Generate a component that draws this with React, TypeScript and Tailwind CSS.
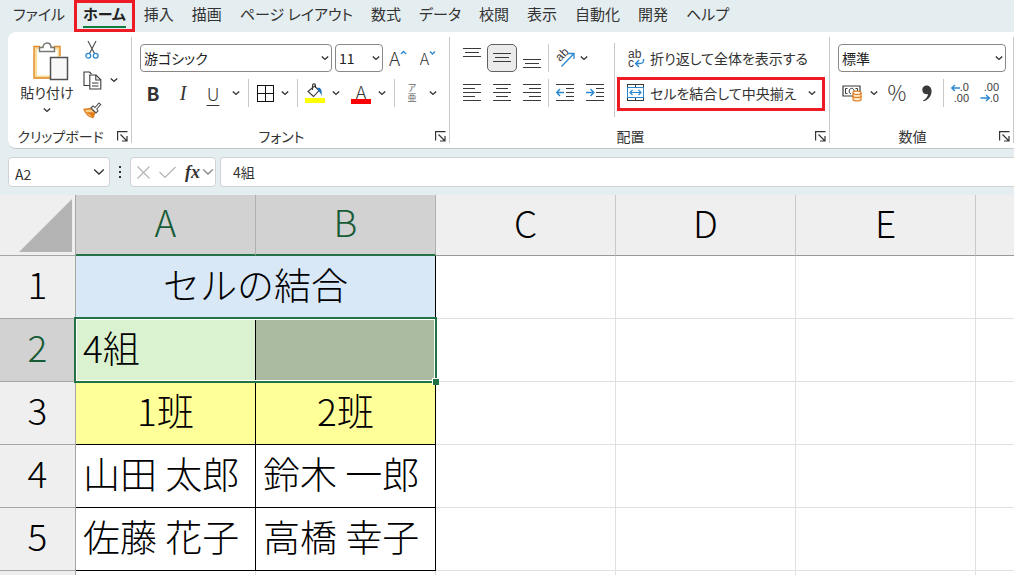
import React from 'react';
import clsx from 'clsx';

const BLUE = '#2b88d0';
const INK = '#3b3a39';

interface IconButtonProps {
  label: string;
  className?: string;
  children: React.ReactNode;
}

const IconButton: React.FC<IconButtonProps> = ({ label, className, children }) => (
  <button
    type="button"
    aria-label={label}
    className={clsx('flex h-7 shrink-0 items-center justify-center', className ?? 'w-[30px]')}
  >
    {children}
  </button>
);

const Chevron: React.FC<{ className?: string; size?: number }> = ({ className, size = 8 }) => (
  <svg width={size} height={size} viewBox="0 0 8 8" fill="none" className={className ?? 'text-[#333333]'}>
    <path d="M0.8 2.4 L4 5.4 L7.2 2.4" stroke="currentColor" strokeWidth={size > 8 ? 0.9 : 1.4} />
  </svg>
);

const MenuArrow: React.FC<{ label: string }> = ({ label }) => (
  <IconButton label={label} className="w-4">
    <Chevron />
  </IconButton>
);

const Separator: React.FC<{ className?: string }> = ({ className }) => (
  <div className={clsx('h-7 w-px shrink-0 bg-[#c8c8c8]', className)} />
);

interface GroupProps {
  title: string;
  className: string;
  children: React.ReactNode;
}

const Group: React.FC<GroupProps> = ({ title, className, children }) => (
  <section
    aria-label={title}
    className={clsx('my-[5px] flex shrink-0 flex-col gap-5 border-r border-[#c8c8c8] pt-[5px]', className)}
  >
    <div className="flex h-[67px]">{children}</div>
    <div className="flex h-[14px] items-center">
      <span className="flex-1 pr-1 text-center text-[14px] leading-[14px]">{title}</span>
      <button type="button" aria-label={`${title}の設定`} className="flex w-[14px] items-center">
        <svg width="11" height="11" viewBox="0 0 11 11" fill="none" stroke="#333" strokeWidth="1.2">
          <path d="M0.6 9.5 V0.6 H10.5" />
          <path d="M3.5 3.5 L9.5 9.5 M10 5 V10 H5" />
        </svg>
      </button>
    </div>
  </section>
);

const SelectBox: React.FC<{ label: string; value: string; className: string }> = ({ label, value, className }) => (
  <div className={clsx('relative shrink-0', className)}>
    <select
      aria-label={label}
      defaultValue={value}
      className="h-7 w-full appearance-none rounded-[4px] border border-[#8a8886] bg-white pl-[3px] text-[14px] text-[#222222]"
    >
      <option>{value}</option>
    </select>
    <Chevron className="pointer-events-none absolute top-[10px] right-[3px] text-[#333333]" />
  </div>
);

const LINE_ENDS = {
  left: [[0, 18], [0, 12], [0, 18], [0, 12], [0, 18]],
  center: [[0, 18], [3, 15], [0, 18], [3, 15], [0, 18]],
  right: [[0, 18], [6, 18], [0, 18], [6, 18], [0, 18]],
};

const AlignIcon: React.FC<{ side: keyof typeof LINE_ENDS }> = ({ side }) => (
  <svg width="18" height="18" viewBox="0 0 18 18" stroke={INK} shapeRendering="crispEdges">
    {LINE_ENDS[side].map(([from, to], i) => (
      <path key={i} d={`M${from} ${i * 4 + 0.5} H${to}`} />
    ))}
  </svg>
);

const VerticalIcon: React.FC<{ top: number }> = ({ top }) => (
  <svg width="18" height="28" viewBox="0 0 18 28" stroke={INK} shapeRendering="crispEdges">
    <path d={`M0 ${top + 0.5} H18 M2 ${top + 4.5} H16 M0 ${top + 8.5} H18`} />
  </svg>
);

const IndentIcon: React.FC<{ direction: 'in' | 'out' }> = ({ direction }) => (
  <svg width="18" height="18" viewBox="0 0 18 18" fill="none">
    <path
      d="M0 0.5 H18 M10 4.5 H18 M10 8.5 H18 M10 12.5 H18 M0 16.5 H18"
      stroke={INK}
      shapeRendering="crispEdges"
    />
    <path
      d={direction === 'out' ? 'M8 8.5 H1 M4 5 L0.8 8.5 L4 12' : 'M0 8.5 H7.5 M4.5 5 L7.8 8.5 L4.5 12'}
      stroke={BLUE}
      strokeWidth="1.4"
    />
  </svg>
);

const PasteIcon: React.FC = () => (
  <svg width="36" height="40" viewBox="0 0 36 40" fill="none" className="ml-2 shrink-0">
    <path d="M2.5 6 H26 V35 H2.5 Z" fill="#fff" stroke="#fbdc9a" strokeWidth="3" />
    <path d="M7 4.5 H1 V36 H17 M21 4.5 H27 V14" stroke="#e08a2c" strokeWidth="1.4" />
    <path
      d="M6.5 9.5 V5.5 H10 C10 3 11.5 1 14 1 C16.5 1 18 3 18 5.5 H21.5 V9.5 Z"
      fill="#fff"
      stroke="#777"
      strokeWidth="1.4"
    />
    <path d="M17.5 15.5 H34.5 V37.5 H17.5 Z" fill="#f8f8f8" stroke="#505050" strokeWidth="1.5" />
  </svg>
);

const CutIcon: React.FC = () => (
  <svg width="14" height="20" viewBox="0 0 14 20" fill="none">
    <path d="M3 1 L9.5 13.5 M11 1 L4.5 13.5" stroke="#555" strokeWidth="1.2" />
    <circle cx="3.3" cy="15.7" r="2.4" stroke={BLUE} strokeWidth="1.3" />
    <circle cx="10.7" cy="15.7" r="2.4" stroke={BLUE} strokeWidth="1.3" />
  </svg>
);

const CopyIcon: React.FC = () => (
  <svg width="19" height="19" viewBox="0 0 19 19" fill="none" stroke={INK} strokeWidth="1.1">
    <path d="M6.5 14.5 H1 V1 H6.5 L8.5 3" />
    <path d="M6.8 4 H13 L17.8 8.8 V18 H6.8 Z" fill="#fff" />
    <path d="M12.8 4 V9 H17.8 M9 12 H15.5 M9 15 H15.5" />
  </svg>
);

const PainterIcon: React.FC = () => (
  <svg width="19" height="17" viewBox="0 0 19 17" fill="none">
    <path d="M1 7.5 L8 6.5 L12 10.5 L10 15.5 C6 15 3 12 1 7.5 Z" fill="#fbd08a" stroke="#e07b1c" strokeWidth="1.3" />
    <path d="M3.5 10 L12 10.5 L10 15.5 Z" fill="#e07b1c" />
    <path d="M8 6 L10 4 L12 5.5 L16 1 L17.7 2.5 L13.8 7 L15 9 L13 11 Z" fill="#fff" stroke="#555" strokeWidth="1.1" />
  </svg>
);

const BorderIcon: React.FC = () => (
  <svg width="17" height="17" viewBox="0 0 17 17" fill="none" stroke="#111" shapeRendering="crispEdges">
    <path d="M0.5 0.5 H16.5 V16.5 H0.5 Z M8.5 0.5 V16.5 M0.5 8.5 H16.5" />
  </svg>
);

const FillIcon: React.FC = () => (
  <svg width="20" height="20" viewBox="0 0 20 20" fill="none">
    <path d="M3 8.5 L9.5 3 L14 7.5 L8.5 13.5 Z" fill="#fff" stroke={INK} strokeWidth="1.1" />
    <path d="M7.5 7 V2.5 C7.5 0.3 10.5 0.3 10.5 2.5 V5" stroke={INK} strokeWidth="1.1" />
    <path d="M12 5 C15.5 4 17.5 6.5 16.5 13 C15.8 10.5 15 9 13.5 8.5 Z" fill="#1f6fb8" />
    <path d="M0 15 H20 V20 H0 Z" fill="#ffff00" />
  </svg>
);

const OrientationIcon: React.FC = () => (
  <svg width="22" height="20" viewBox="0 0 22 20" fill="none" className="overflow-visible">
    <text x="8" y="14" transform="rotate(-45 8 14)" fontSize="12" fontFamily="Liberation Sans" fill={INK}>
      ab
    </text>
    <path d="M9.5 18.5 L21.5 6 M16 5.5 H22 V11" stroke={BLUE} strokeWidth="1.3" />
  </svg>
);

const WrapIcon: React.FC = () => (
  <svg width="18" height="18" viewBox="0 0 18 18" fill="none" className="overflow-visible">
    <text x="1" y="9" fontSize="12" fontFamily="Liberation Sans" fill={INK}>
      ab
    </text>
    <text x="1" y="18" fontSize="12" fontFamily="Liberation Sans" fill={INK}>
      c
    </text>
    <path d="M16.5 10 C17 13 15.5 14.5 13 14.5 H9 M12 11 L8.6 14.5 L12 18" stroke={BLUE} strokeWidth="1.4" />
  </svg>
);

const MergeIcon: React.FC = () => (
  <svg width="18" height="18" viewBox="0 0 18 18" fill="none">
    <path d="M0.5 0.5 H16.5 V16.5 H0.5 Z M8.5 0.5 V4 M8.5 13 V17" stroke={INK} shapeRendering="crispEdges" />
    <path d="M0.5 3.5 H16.5 V13.5 H0.5 Z" fill="#fff" stroke={BLUE} shapeRendering="crispEdges" />
    <path d="M3 8.5 H14 M5.5 6 L3 8.5 L5.5 11 M11.5 6 L14 8.5 L11.5 11" stroke={BLUE} strokeWidth="1.2" />
  </svg>
);

const AccountingIcon: React.FC = () => (
  <svg width="20" height="18" viewBox="0 0 20 18" fill="none">
    <path d="M1 2 H18 V12 H1 Z" stroke={INK} strokeWidth="1.2" />
    <path d="M5.5 4.5 H3.5 V9.5 H5.5 M13.5 4.5 H15.5 V7" stroke={INK} />
    <path d="M9 9.8 C6.5 9.5 6.5 4.5 9.5 4.3 C11.5 4.3 12.2 6 12 7.5" stroke={INK} />
    <path d="M11 8.8 V15.5 C11 17.5 19 17.5 19 15.5 V8.8" fill="#fde5c4" stroke="#e07b1c" strokeWidth="1.2" />
    <ellipse cx="15" cy="8.8" rx="4" ry="1.6" fill="#fff" stroke="#e07b1c" strokeWidth="1.2" />
    <path d="M11 12 C11 14 19 14 19 12" stroke="#e07b1c" strokeWidth="1.2" />
  </svg>
);

const CommaIcon: React.FC = () => (
  <svg width="10" height="17" viewBox="0 0 10 17">
    <path
      d="M4.6 0.5 C7.8 0.5 9.6 3 9.6 6 C9.6 11 6.5 15 1.5 16.3 L1 15.4 C4 14 6 11.5 6 9 C2.5 10 0.3 7.8 0.3 4.8 C0.3 2.3 2.2 0.5 4.6 0.5 Z"
      fill={INK}
    />
  </svg>
);

const DecimalIcon: React.FC<{ more: boolean }> = ({ more }) => (
  <svg
    width="20"
    height="20"
    viewBox="0 0 20 20"
    fill="none"
    fontSize="11"
    fontFamily="Liberation Sans"
    className="overflow-visible"
  >
    <text x="19" y="8" textAnchor="end" fill={INK}>
      {more ? '.0' : '.00'}
    </text>
    <text x="19" y="19" textAnchor="end" fill={INK}>
      {more ? '.00' : '.0'}
    </text>
    <path
      d={more ? 'M10 5 H2 M5 2 L1.8 5 L5 8' : 'M0.5 15 H9 M6 12 L9.4 15 L6 18'}
      stroke={BLUE}
      strokeWidth="1.4"
    />
  </svg>
);

const TABS = [
  'ファイル',
  'ホーム',
  '挿入',
  '描画',
  'ページ レイアウト',
  '数式',
  'データ',
  '校閲',
  '表示',
  '自動化',
  '開発',
  'ヘルプ',
];

const TabBar: React.FC = () => (
  <nav className="flex h-8 shrink-0 items-start gap-[18px] pl-[13px] text-[15px] leading-7 whitespace-nowrap">
    {TABS.map(tab =>
      tab === 'ホーム' ? (
        <button key={tab} type="button" className="relative font-bold text-[#222222]">
          {tab}
          <span className="absolute inset-x-0 top-[26px] h-0.5 bg-[#107c41]" />
          <span className="absolute -inset-x-[9px] top-0 h-8 border-[3px] border-[#ed1c24]" />
        </button>
      ) : (
        <button key={tab} type="button">
          {tab}
        </button>
      )
    )}
  </nav>
);

const Ribbon: React.FC = () => (
  <div className="ml-2 flex shrink-0 overflow-hidden rounded-l-lg border-b border-[#c4c8ca] bg-white whitespace-nowrap">
    <Group title="クリップボード" className="w-[124px]">
      <button type="button" className="ml-3 flex w-[54px] flex-col items-center text-[14px] leading-5">
        <PasteIcon />
        <span>貼り付け</span>
        <Chevron className="mt-1 shrink-0 text-[#333333]" />
      </button>
      <div className="-mt-1.5 ml-2 flex flex-col gap-0.5">
        <IconButton label="切り取り" className="w-5">
          <CutIcon />
        </IconButton>
        <div className="flex gap-1">
          <IconButton label="コピー" className="w-5">
            <CopyIcon />
          </IconButton>
          <MenuArrow label="コピーのオプション" />
        </div>
        <IconButton label="書式のコピー" className="w-5">
          <PainterIcon />
        </IconButton>
      </div>
    </Group>

    <Group title="フォント" className="w-[318px]">
      <div className="flex flex-col gap-[3px]">
        <div className="flex h-8 items-center pl-2">
          <SelectBox label="フォント名" value="游ゴシック" className="w-[192px]" />
          <SelectBox label="フォント サイズ" value="11" className="ml-[3px] w-12" />
          <IconButton label="フォント サイズの拡大">
            <span className="text-[19px] font-light">A</span>
            <svg width="7" height="16" viewBox="0 0 7 16" fill="none">
              <path d="M1 4 L3.5 1.5 L6 4" stroke={BLUE} strokeWidth="1.4" />
            </svg>
          </IconButton>
          <IconButton label="フォント サイズの縮小">
            <span className="text-[16px] font-light">A</span>
            <svg width="7" height="16" viewBox="0 0 7 16" fill="none">
              <path d="M1 1.5 L3.5 4 L6 1.5" stroke={BLUE} strokeWidth="1.4" />
            </svg>
          </IconButton>
        </div>
        <div className="flex h-8 items-center pl-[6px]">
          <IconButton label="太字">
            <span className="text-[19px] font-bold">B</span>
          </IconButton>
          <IconButton label="斜体">
            <span className="font-['Liberation_Serif',serif] text-[20px] italic">I</span>
          </IconButton>
          <IconButton label="下線">
            <span className="text-[18px] leading-5 font-light underline underline-offset-4">U</span>
          </IconButton>
          <MenuArrow label="下線の種類" />
          <Separator className="mx-1" />
          <IconButton label="罫線" className="w-6">
            <BorderIcon />
          </IconButton>
          <MenuArrow label="罫線の種類" />
          <Separator className="mx-1" />
          <IconButton label="塗りつぶしの色" className="w-[26px]">
            <FillIcon />
          </IconButton>
          <MenuArrow label="塗りつぶしの色の選択" />
          <IconButton label="フォントの色" className="ml-1 w-[26px]">
            <span className="flex w-5 flex-col items-center border-b-[5px] border-[#ff0000] text-[18px] leading-4 font-light">
              A
            </span>
          </IconButton>
          <MenuArrow label="フォントの色の選択" />
          <Separator className="mx-1" />
          <IconButton label="ふりがなの表示" className="w-[26px]">
            <span className="flex flex-col text-[9px] leading-[10px] text-[#666666]">
              <span>ア</span>
              <span>亜</span>
            </span>
          </IconButton>
          <MenuArrow label="ふりがなの設定" />
        </div>
      </div>
    </Group>

    <Group title="配置" className="w-[380px]">
      <div className="flex flex-col gap-[3px] pl-[7px]">
        <div className="flex h-8 items-center">
          <IconButton label="上揃え">
            <VerticalIcon top={4} />
          </IconButton>
          <IconButton label="上下中央揃え" className="w-[30px] rounded-[5px] border border-[#616161] bg-[#ebebeb]">
            <VerticalIcon top={9} />
          </IconButton>
          <IconButton label="下揃え">
            <VerticalIcon top={15} />
          </IconButton>
          <Separator className="mx-px" />
          <IconButton label="方向" className="w-[26px]">
            <OrientationIcon />
          </IconButton>
          <MenuArrow label="方向の選択" />
        </div>
        <div className="flex h-8 items-center">
          <IconButton label="左揃え">
            <AlignIcon side="left" />
          </IconButton>
          <IconButton label="中央揃え">
            <AlignIcon side="center" />
          </IconButton>
          <IconButton label="右揃え">
            <AlignIcon side="right" />
          </IconButton>
          <Separator className="mx-px" />
          <IconButton label="インデントを減らす">
            <IndentIcon direction="out" />
          </IconButton>
          <IconButton label="インデントを増やす">
            <IndentIcon direction="in" />
          </IconButton>
        </div>
      </div>
      <div className="mt-px ml-1 h-[74px] w-px shrink-0 bg-[#c8c8c8]" />
      <div className="mr-1 ml-0.5 flex flex-1 flex-col gap-[3px] text-[14px]">
        <button type="button" className="flex h-8 items-center gap-[5px] pl-[10px]">
          <WrapIcon />
          <span>折り返して全体を表示する</span>
        </button>
        <button type="button" className="relative flex h-8 items-center gap-[5px] pr-[9px] pl-[10px]">
          <MergeIcon />
          <span className="flex-1 text-left">セルを結合して中央揃え</span>
          <Chevron />
          <span className="absolute inset-x-0 top-0 -bottom-0.5 border-[3px] border-[#ed1c24]" />
        </button>
      </div>
    </Group>

    <Group title="数値" className="w-[184px]">
      <div className="flex flex-col gap-[3px] pl-2">
        <div className="flex h-8 items-center">
          <SelectBox label="数値の書式" value="標準" className="w-[168px]" />
        </div>
        <div className="flex h-8 items-center">
          <IconButton label="通貨表示形式" className="w-7">
            <AccountingIcon />
          </IconButton>
          <MenuArrow label="通貨の選択" />
          <IconButton label="パーセント スタイル">
            <span className="text-[21px] font-light">%</span>
          </IconButton>
          <IconButton label="桁区切りスタイル">
            <CommaIcon />
          </IconButton>
          <Separator className="mx-px" />
          <IconButton label="小数点以下の表示桁数を増やす">
            <DecimalIcon more />
          </IconButton>
          <IconButton label="小数点以下の表示桁数を減らす">
            <DecimalIcon more={false} />
          </IconButton>
        </div>
      </div>
    </Group>
  </div>
);

const FormulaBar: React.FC = () => (
  <div className="flex shrink-0 items-center py-2 pl-2">
    <div className="flex h-[30px] w-[102px] items-center rounded-[4px] border border-[#cfd3d5] bg-white pr-1">
      <input aria-label="名前ボックス" defaultValue="A2" className="w-0 flex-1 pt-1 pl-[6px] text-[14px] outline-none" />
      <button type="button" aria-label="名前の一覧">
        <Chevron size={12} />
      </button>
    </div>
    <div className="flex w-5 flex-col items-center gap-[3px]">
      <span className="size-0.5 bg-[#333333]" />
      <span className="size-0.5 bg-[#333333]" />
      <span className="size-0.5 bg-[#333333]" />
    </div>
    <div className="flex h-[30px] w-[86px] items-center justify-between rounded-[4px] border border-[#cfd3d5] bg-white pr-px pl-[6px]">
      <button type="button" aria-label="キャンセル">
        <svg width="13" height="13" viewBox="0 0 13 13" stroke="#b4b4b4" strokeWidth="1.2">
          <path d="M0.5 0.5 L12.5 12.5 M12.5 0.5 L0.5 12.5" />
        </svg>
      </button>
      <button type="button" aria-label="入力">
        <svg width="17" height="13" viewBox="0 0 17 13" fill="none" stroke="#b4b4b4" strokeWidth="1.2">
          <path d="M0.5 6 L6 11.5 L16.5 1" />
        </svg>
      </button>
      <button type="button" className="flex items-center font-['Liberation_Serif',serif] text-[18px] font-bold italic">
        fx
        <Chevron size={12} className="ml-0.5 text-[#888888]" />
      </button>
    </div>
    <input
      aria-label="数式バー"
      defaultValue="4組"
      className="ml-1 h-[30px] flex-1 rounded-l-[4px] border border-r-0 border-[#cfd3d5] bg-white pl-3 text-[14px] outline-none"
    />
  </div>
);

const COLUMNS = ['A', 'B', 'C', 'D', 'E'];

const BODY: { row: number; cells: string[]; fill: string }[] = [
  { row: 3, cells: ['1班', '2班'], fill: 'bg-[#ffff99] text-center' },
  { row: 4, cells: ['山田 太郎', '鈴木 一郎'], fill: 'bg-white' },
  { row: 5, cells: ['佐藤 花子', '高橋 幸子'], fill: 'bg-white' },
];

const CELL = 'border-r border-b border-black px-[7px] pt-0 pb-[6px]';

const RowHeader: React.FC<{ row?: number; selected?: boolean }> = ({ row, selected }) => (
  <th
    scope="row"
    className={clsx(
      'h-[63px] border-r border-b border-[#a6a6a6] pb-2 font-light',
      selected ? 'bg-[#d2d2d2] text-[#185c37]' : 'bg-[#efefef]'
    )}
  >
    {row}
  </th>
);

const EmptyCells: React.FC<{ count?: number }> = ({ count = 4 }) => (
  <>
    {Array.from({ length: count }, (_, i) => (
      <td key={i} className="border-r border-b border-[#e0e0e0]" />
    ))}
  </>
);

const Sheet: React.FC = () => (
  <main className="flex-1 overflow-hidden bg-white">
    <table className="w-[1156px] table-fixed border-separate border-spacing-0 text-[37px] leading-[52px] font-light text-black [font-feature-settings:normal]">
      <colgroup>
        <col className="w-[76px]" />
        {COLUMNS.map(column => (
          <col key={column} className="w-[180px]" />
        ))}
        <col className="w-[180px]" />
      </colgroup>
      <thead>
        <tr>
          <td className="h-[61px] border-r border-b border-[#a6a6a6] bg-[#efefef]">
            <svg width="53" height="53" viewBox="0 0 53 53" className="ml-[19px]">
              <path d="M53 0 V53 H0 Z" fill="#b4b4b4" />
            </svg>
          </td>
          {COLUMNS.map((column, i) => (
            <th
              key={column}
              scope="col"
              className={clsx(
                'h-[61px] border-r pb-[7px] font-light',
                i < 2
                  ? 'border-b-2 border-r-[#b0b0b0] border-b-[#217346] bg-[#d2d2d2] text-[#185c37]'
                  : 'border-b border-r-[#c8c8c8] border-b-[#999999] bg-[#efefef]'
              )}
            >
              {column}
            </th>
          ))}
          <td className="border-b border-[#999999] bg-[#efefef]" />
        </tr>
      </thead>
      <tbody>
        <tr>
          <RowHeader row={1} />
          <td colSpan={2} className={clsx(CELL, 'bg-[#d9e8f6] text-center')}>
            セルの結合
          </td>
          <EmptyCells />
        </tr>
        <tr>
          <RowHeader row={2} selected />
          <td className={clsx(CELL, 'relative bg-[#dbf2d0]')}>
            4組
            {/* selection frame over A2:B2 */}
            <div className="pointer-events-none absolute -top-0.5 -left-0.5 z-10 h-[66px] w-[363px] border-2 border-[#217346]">
              <div className="h-full border border-white" />
              <div className="absolute -right-[4px] -bottom-[4px] size-[7px] border-t border-l border-white bg-[#217346]" />
            </div>
          </td>
          <td className={clsx(CELL, 'bg-[#aabba2]')} />
          <EmptyCells />
        </tr>
        {BODY.map(({ row, cells, fill }) => (
          <tr key={row}>
            <RowHeader row={row} />
            {cells.map(text => (
              <td key={text} className={clsx(CELL, fill)}>
                {text}
              </td>
            ))}
            <EmptyCells />
          </tr>
        ))}
        <tr>
          <RowHeader />
          <EmptyCells count={6} />
        </tr>
      </tbody>
    </table>
  </main>
);

const App: React.FC = () => (
  <div className="flex h-screen flex-col overflow-hidden bg-[#e4edf0] font-['Noto_Sans_CJK_JP',sans-serif] text-[#333333] [font-feature-settings:'palt']">
    <TabBar />
    <Ribbon />
    <FormulaBar />
    <Sheet />
  </div>
);

export default App;
